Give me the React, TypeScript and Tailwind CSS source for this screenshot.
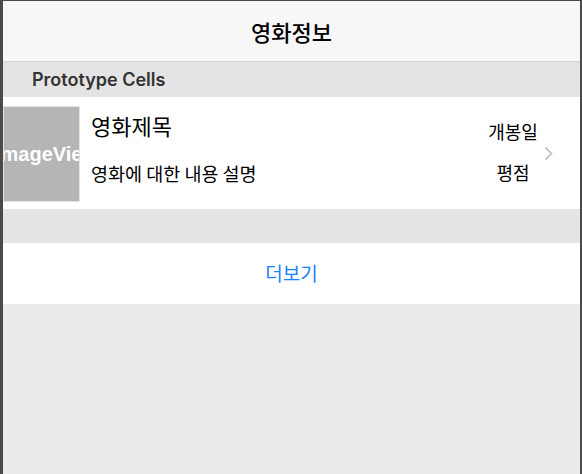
import React from "react";

const font = { fontFamily: '"Noto Sans CJK KR", "Noto Sans", sans-serif' };

export default function App() {
  return (
    <div
      className="w-[582px] h-[474px] flex flex-col bg-[#ebebeb] border-t border-l-[3px] border-r-2 border-[#4a4a4a] overflow-hidden"
      style={font}
    >
      <div className="h-[61px] flex items-center justify-center bg-[#f7f7f7] border-b border-[#d6d6d6] shrink-0">
        <span className="text-[22px] font-medium text-black">영화정보</span>
      </div>
      <div className="h-[35px] flex items-center pl-[29px] bg-[#e4e4e4] shrink-0">
        <span className="text-[18px] font-semibold text-[#333] font-['Inter',sans-serif]">Prototype Cells</span>
      </div>
      <div className="h-[112px] flex items-center bg-white shrink-0">
        <div className="w-[77px] h-[96px] mt-[2px] border border-[#e3e3e3] bg-[#b5b5b5] flex items-center justify-center overflow-hidden">
          <span className="text-[20px] font-bold text-white whitespace-nowrap pl-[10px] font-['Liberation_Sans',sans-serif]">ImageView</span>
        </div>
        <div className="flex-1 flex flex-col ml-[11px] h-full pt-[13px]">
          <span className="text-[22px] leading-[30px] text-black">영화제목</span>
          <span className="text-[18.5px] leading-[26px] text-black mt-[20px]">영화에 대한 내용 설명</span>
        </div>
        <div className="flex flex-col items-center h-full pt-[22px] w-[54px]">
          <span className="text-[18px] leading-[24px] text-black">개봉일</span>
          <span className="text-[18px] leading-[24px] text-black mt-[17px]">평점</span>
        </div>
        <svg className="ml-[4px] mr-[27px]" width="9" height="15" viewBox="0 0 9 15">
          <path d="M1.5 1.5 L7.5 7.5 L1.5 13.5" fill="none" stroke="#c4c4c9" strokeWidth="1.8" />
        </svg>
      </div>
      <div className="h-[34px] bg-[#e4e4e4] shrink-0" />
      <div className="h-[61px] flex items-center justify-center bg-white shrink-0">
        <span className="text-[19px] text-[#1a82fb]">더보기</span>
      </div>
      <div className="flex-1 bg-[#ebebeb]" />
    </div>
  );
}
